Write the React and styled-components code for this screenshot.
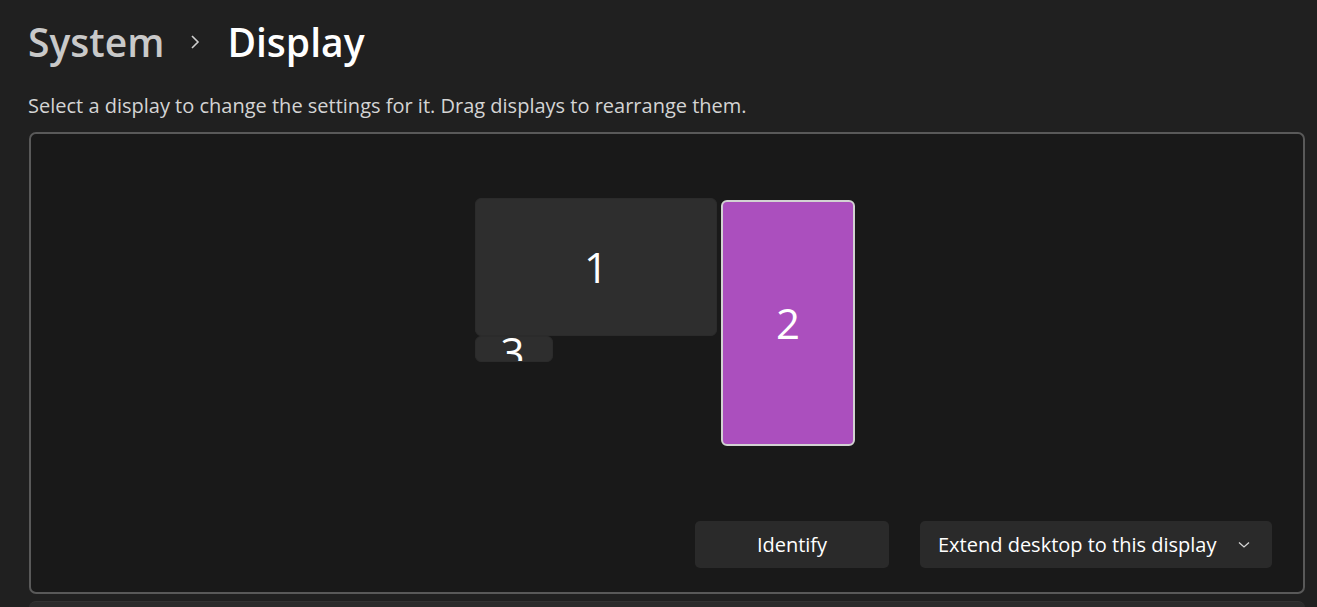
import React from 'react';
import styled, { createGlobalStyle } from 'styled-components';

const GlobalStyle = createGlobalStyle`
    html, body {
        margin: 0;
        padding: 0;
        background: #202020;
        overflow: hidden;
    }
    body {
        font-family: 'Open Sans', 'Noto Sans', sans-serif;
        color: #ffffff;
    }
`;

const monitors = [
    { id: 1, left: 444, top: 64, width: 242, height: 138, active: false },
    { id: 3, left: 444, top: 202, width: 78, height: 26, active: false, small: true },
    { id: 2, left: 690, top: 66, width: 134, height: 246, active: true },
];

export default function App() {
    return (
        <Page>
            <GlobalStyle />
            <Breadcrumb>
                <Crumb>System</Crumb>
                <Chevron viewBox="0 0 12 16" width="12" height="16">
                    <path d="M3 2 L9 8 L3 14" fill="none" stroke="#cfcfcf" strokeWidth="1.6" />
                </Chevron>
                <Crumb current>Display</Crumb>
            </Breadcrumb>
            <Hint>Select a display to change the settings for it. Drag displays to rearrange them.</Hint>
            <Panel>
                <Arrangement>
                    {monitors.map((m) => (
                        <Monitor
                            key={m.id}
                            $active={m.active}
                            $small={m.small}
                            style={{ left: m.left, top: m.top, width: m.width, height: m.height }}
                        >
                            {m.id}
                        </Monitor>
                    ))}
                </Arrangement>
                <Actions>
                    <Button $width={194}>Identify</Button>
                    <Select>
                        <span>Extend desktop to this display</span>
                        <svg viewBox="0 0 12 8" width="12" height="8">
                            <path d="M1 1.5 L6 6 L11 1.5" fill="none" stroke="#d6d6d6" strokeWidth="1.3" />
                        </svg>
                    </Select>
                </Actions>
            </Panel>
            <NextCard />
        </Page>
    );
}

const Page = styled.div`
    width: 1317px;
    height: 607px;
    overflow: hidden;
    padding: 0 12px 0 29px;
    box-sizing: border-box;
`;

const Breadcrumb = styled.div`
    display: flex;
    align-items: center;
    height: 82px;
`;

const Crumb = styled.h1`
    margin: 0;
    margin-left: -1px;
    font-size: 39px;
    font-weight: 600;
    color: ${(p) => (p.current ? '#ffffff' : '#c9c9c9')};
`;

const Chevron = styled.svg`
    margin: 2px 27px 0 25px;
`;

const Hint = styled.p`
    margin: 10px 0 12px -1px;
    font-size: 20px;
    line-height: 28px;
    color: #d4d4d4;
`;

const Panel = styled.section`
    display: flex;
    flex-direction: column;
    height: 462px;
    box-sizing: border-box;
    border: 2px solid #595959;
    border-radius: 7px;
    background: #191919;
    padding: 0 31px 24px 0;
`;

const Arrangement = styled.div`
    position: relative;
    flex: 1;
`;

const Monitor = styled.div`
    position: absolute;
    box-sizing: border-box;
    display: flex;
    justify-content: center;
    align-items: ${(p) => (p.$small ? 'flex-start' : 'center')};
    overflow: hidden;
    border-radius: 6px;
    background: ${(p) => (p.$active ? '#ab4fbe' : '#2e2e2e')};
    border: ${(p) => (p.$active ? '2px solid #d2d2d2' : '1px solid #2b2b2b')};
    font-size: 42px;
    font-weight: 400;
    line-height: ${(p) => (p.$small ? '30px' : '1')};
    color: #ffffff;
    ${(p) => p.$small && 'text-indent: -3px;'}
`;

const Actions = styled.div`
    display: flex;
    justify-content: flex-end;
    gap: 31px;
`;

const Button = styled.button`
    width: ${(p) => p.$width}px;
    height: 47px;
    border: none;
    border-radius: 5px;
    background: #2a2a2a;
    color: #ffffff;
    font-family: inherit;
    font-size: 20px;
`;

const Select = styled(Button)`
    width: 352px;
    display: flex;
    align-items: center;
    justify-content: space-between;
    padding: 0 22px 0 18px;
    box-sizing: border-box;
`;

const NextCard = styled.div`
    margin-top: 7px;
    height: 40px;
    border-radius: 7px 7px 0 0;
    background: #2b2b2b;
    border-top: 1px solid #333;
`;
